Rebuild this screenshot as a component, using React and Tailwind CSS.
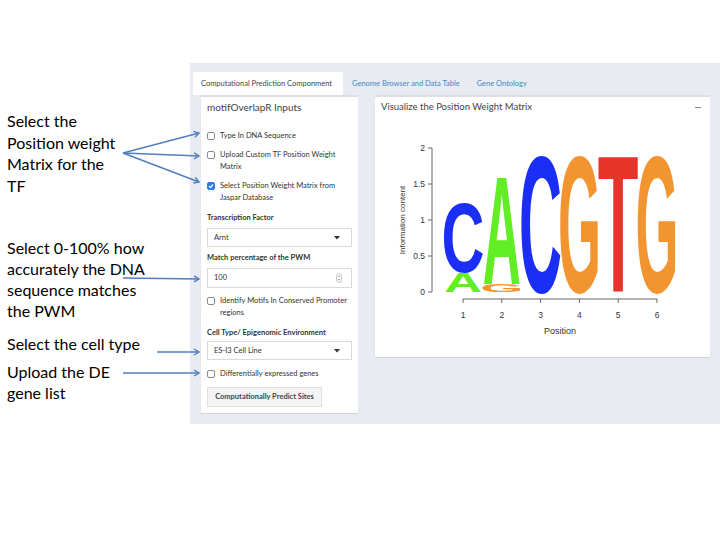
import React from 'react'

const UI_FONT = { fontFamily: 'Lato, "Liberation Sans", sans-serif' }

// ink bounds per glyph at font-size 100 (Liberation Sans Bold)
const GLYPH = {
  A: [0, 72],
  C: [4.4, 68.4],
  G: [4.5, 73.1],
  T: [2.1, 59.1],
}
const COLORS = { A: '#62ee24', C: '#1b2ef5', G: '#f29530', T: '#e7342a' }

const COLUMNS = [
  [['A', 0, 0.27], ['C', 0.28, 1.25]],
  [['G', 0, 0.1], ['A', 0.11, 1.65]],
  [['C', 0, 1.93]],
  [['G', 0, 1.93]],
  [['T', 0, 1.93]],
  [['G', 0, 1.93]],
]

function Letter({ ch, x, w, y0, y1 }) {
  const [l, r] = GLYPH[ch]
  const sx = w / (r - l)
  const sy = (y0 - y1) / 71.6
  return (
    <g transform={`translate(${x - l * sx},${y0}) scale(${sx},${sy})`}>
      <text x="0" y="0" fontSize="100" fontWeight="700" fill={COLORS[ch]} fontFamily="Liberation Sans, Arial, sans-serif">
        {ch}
      </text>
    </g>
  )
}

function Logo() {
  const base = 174
  const unit = 72
  const step = 38.8
  return (
    <svg width="333" height="237" className="block">
      {COLUMNS.map((col, i) =>
        col.map(([ch, a, b], j) => (
          <Letter
            key={`${i}-${j}`}
            ch={ch}
            x={88 + i * step - 19}
            w={38}
            y0={base - a * unit}
            y1={base - b * unit}
          />
        ))
      )}
      <g fontFamily="Liberation Sans, Arial, sans-serif" fontSize="8.5" fill="#333">
        {/* y axis */}
        <line x1="57" y1="30" x2="57" y2="174" stroke="#666" strokeWidth="1" />
        {[0, 0.5, 1, 1.5, 2].map((v) => (
          <g key={v}>
            <line x1="53" x2="57" y1={base - v * unit} y2={base - v * unit} stroke="#666" />
            <text x="50" y={base - v * unit + 3} textAnchor="end">{v}</text>
          </g>
        ))}
        <text transform="translate(30,102) rotate(-90)" textAnchor="middle" fontSize="8">Information content</text>
        {/* x axis */}
        <line x1="88" y1="181" x2={88 + 5 * step} y2="181" stroke="#666" />
        {[1, 2, 3, 4, 5, 6].map((n, i) => (
          <g key={n}>
            <line x1={88 + i * step} x2={88 + i * step} y1="181" y2="185" stroke="#666" />
            <text x={88 + i * step} y="200" textAnchor="middle">{n}</text>
          </g>
        ))}
        <text x="185" y="216" textAnchor="middle" fontSize="9">Position</text>
      </g>
    </svg>
  )
}

function Check({ checked, lines }) {
  return (
    <div className="flex items-start gap-[3px]">
      <span
        className={`mt-[2px] w-[8px] h-[8px] shrink-0 rounded-[2px] border flex items-center justify-center ${
          checked ? 'bg-[#2f7be4] border-[#2f7be4]' : 'bg-white border-[#8a8a8a]'
        }`}
      >
        {checked && (
          <svg width="6" height="6" viewBox="0 0 6 6">
            <path d="M1 3.2 L2.5 4.6 L5 1.5" stroke="#fff" strokeWidth="1.2" fill="none" />
          </svg>
        )}
      </span>
      <div className="text-[7.5px] leading-[12px] text-[#333] pl-[2px]">
        {lines.map((t) => (
          <div key={t}>{t}</div>
        ))}
      </div>
    </div>
  )
}

function SelectBox({ value, className }) {
  return (
    <div className={`h-[19px] bg-white border border-[#d9d9d9] flex items-center justify-between px-[6px] ${className}`}>
      <span className="text-[7.5px] text-[#333]">{value}</span>
      <svg width="6" height="4" viewBox="0 0 6 4" className="mr-[5px]">
        <path d="M0 0 L6 0 L3 3.5 Z" fill="#333" />
      </svg>
    </div>
  )
}

function Label({ children, className }) {
  return <div className={`text-[7.5px] leading-[12px] font-bold text-[#333] ${className}`}>{children}</div>
}

export default function App() {
  return (
    <div className="relative w-[720px] h-[540px] bg-white flex overflow-hidden">
      {/* annotations */}
      <div
        className="w-[190px] shrink-0 pl-[7px] pt-[110px] text-[16px] leading-[21.5px] text-black"
        style={{ fontFamily: 'Lato, "Open Sans", sans-serif' }}
      >
        <div>Select the</div>
        <div>Position weight</div>
        <div>Matrix for the</div>
        <div>TF</div>
        <div className="mt-[41px] leading-[21px]">
          <div>Select 0-100% how</div>
          <div>accurately the DNA</div>
          <div>sequence matches</div>
          <div>the PWM</div>
        </div>
        <div className="mt-[12px]">Select the cell type</div>
        <div className="mt-[6px]">Upload the DE</div>
        <div>gene list</div>
      </div>

      {/* app screenshot */}
      <div className="mt-[63px] w-[530px] h-[361px] bg-[#e9ebf2] shrink-0" style={UI_FONT}>
        <div className="flex items-end pt-[9px] pl-[3px] h-[32px]">
          <div className="w-[150px] h-[23px] bg-white flex items-center pl-[8px] text-[7.5px] text-[#444]">
            Computational Prediction Componment
          </div>
          <div className="h-[23px] flex items-center pl-[9px] text-[7.5px] text-[#3f88c5]">Genome Browser and Data Table</div>
          <div className="h-[23px] flex items-center pl-[17px] text-[7.5px] text-[#3f88c5]">Gene Ontology</div>
        </div>

        <div className="flex items-start pl-[11px] gap-[17px]">
          {/* inputs panel */}
          <div className="w-[157px] h-[318px] bg-white border-t-[2px] border-[#dcdfe6] shadow-[0_1px_1px_rgba(0,0,0,0.08)] px-[6px] pt-[2px]">
            <div className="text-[10px] leading-[16px] text-[#444]">motifOverlapR Inputs</div>
            <div className="mt-[15px]">
              <Check lines={['Type In DNA Sequence']} />
            </div>
            <div className="mt-[7px]">
              <Check lines={['Upload Custom TF Position Weight', 'Matrix']} />
            </div>
            <div className="mt-[7px]">
              <Check checked lines={['Select Position Weight Matrix from', 'Jaspar Database']} />
            </div>
            <Label className="mt-[8px]">Transcription Factor</Label>
            <SelectBox value="Arnt" className="mt-[4px]" />
            <Label className="mt-[5px]">Match percentage of the PWM</Label>
            <div className="mt-[4px] h-[20px] bg-white border border-[#d9d9d9] flex items-center justify-between px-[6px]">
              <span className="text-[7.5px] text-[#333]">100</span>
              <svg width="6" height="10" viewBox="0 0 6 10" className="mr-[3px]">
                <rect x="0.5" y="0.5" width="5" height="9" rx="2.5" fill="none" stroke="#bbb" strokeWidth="0.8" />
                <path d="M1.8 4 L3 2.8 L4.2 4 M1.8 6 L3 7.2 L4.2 6" stroke="#777" strokeWidth="0.7" fill="none" />
              </svg>
            </div>
            <div className="mt-[7px]">
              <Check lines={['Identify Motifs In Conserved Promoter', 'regions']} />
            </div>
            <Label className="mt-[8px]">Cell Type/ Epigenomic Environment</Label>
            <SelectBox value="ES-I3 Cell Line" className="mt-[2px]" />
            <div className="mt-[8px]">
              <Check lines={['Differentially expressed genes']} />
            </div>
            <div className="mt-[7px] w-[115px] h-[20px] bg-[#f4f4f4] border border-[#e0e0e0] flex items-center justify-center text-[7.5px] font-bold text-[#444]">
              Computationally Predict Sites
            </div>
          </div>

          {/* pwm panel */}
          <div className="w-[335px] h-[262px] bg-white border-t-[2px] border-[#dcdfe6] shadow-[0_1px_1px_rgba(0,0,0,0.08)]">
            <div className="flex items-center justify-between px-[6px] h-[21px]">
              <span className="text-[9.5px] text-[#444]">Visualize the Position Weight Matrix</span>
              <span className="w-[6px] h-[1px] bg-[#888] mr-[3px]" />
            </div>
            <Logo />
          </div>
        </div>
      </div>

      {/* annotation arrows */}
      <svg className="absolute inset-0 pointer-events-none" width="720" height="540">
        <defs>
          <marker id="ah" markerWidth="8" markerHeight="8" refX="6" refY="4" orient="auto" markerUnits="userSpaceOnUse">
            <path d="M1 1 L6 4 L1 7" stroke="#4f7fbf" strokeWidth="1.4" fill="none" />
          </marker>
        </defs>
        <g stroke="#4f7fbf" strokeWidth="1.5" fill="none">
          <line x1="123" y1="153" x2="199" y2="133" markerEnd="url(#ah)" />
          <line x1="123" y1="153" x2="199" y2="156" markerEnd="url(#ah)" />
          <line x1="123" y1="153" x2="199" y2="182" markerEnd="url(#ah)" />
          <line x1="123" y1="278" x2="199" y2="279" markerEnd="url(#ah)" />
          <line x1="157" y1="352" x2="199" y2="352" markerEnd="url(#ah)" />
          <line x1="123" y1="373" x2="199" y2="373" markerEnd="url(#ah)" />
        </g>
      </svg>
    </div>
  )
}
